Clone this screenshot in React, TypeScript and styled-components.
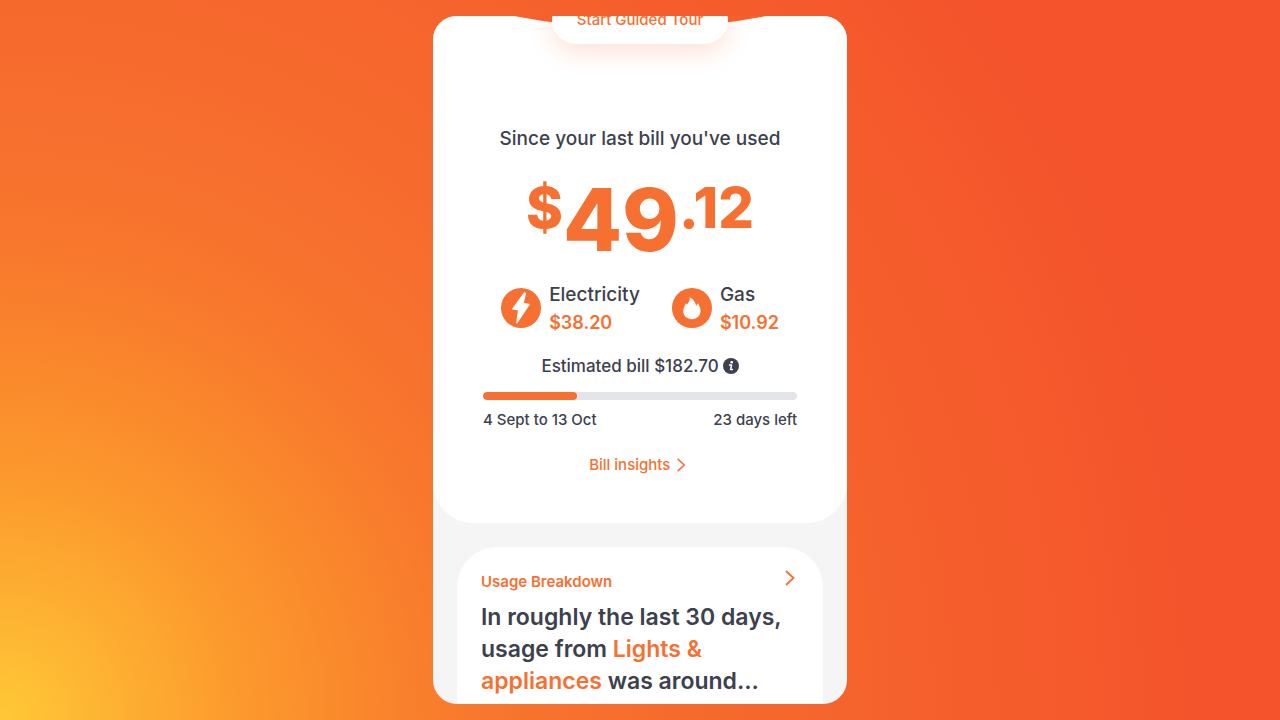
import React from "react";
import styled, { createGlobalStyle } from "styled-components";

const color = {
  orange: "#f67031",
  ink: "#3c414d",
  track: "#e4e5e9",
  canvas: "#f5f5f5",
};

const GlobalStyle = createGlobalStyle`
  *, *::before, *::after { box-sizing: border-box; }
  body {
    margin: 0;
    font-family: Inter, "Liberation Sans", sans-serif;
    color: ${color.ink};
  }
  h1, h2, p { margin: 0; }
`;

const Page = styled.main`
  min-height: 100vh;
  padding: 16px;
  display: flex;
  justify-content: center;
  background: radial-gradient(
    circle farthest-corner at 0% 100%,
    #ffc837 0%,
    #fc9a2d 16%,
    #fa862c 25%,
    #f8782d 32%,
    #f7702e 39%,
    #f6692d 49%,
    #f4532b 83%
  );
`;

const Phone = styled.div`
  width: 100%;
  max-width: 414px;
  height: calc(100vh - 32px);
  overflow: hidden;
  border-radius: 24px;
  background: ${color.canvas};
`;

const Feed = styled.div`
  margin-top: -20px;
  display: flex;
  flex-direction: column;
  gap: 24px;
`;

const Hero = styled.section`
  position: relative;
  display: flex;
  flex-direction: column;
  align-items: center;
  padding: 0 50px 46px;
  background: #fff;
  border-radius: 0 0 40px 40px;
`;

const Curve = styled.svg`
  position: absolute;
  top: 0;
  left: 0;
  width: 100%;
  height: 32px;
`;

const TourButton = styled.button`
  position: relative;
  height: 48px;
  padding: 0 25px;
  border: 0;
  border-radius: 24px;
  background: #fff;
  color: ${color.orange};
  font: 500 15px/24px Inter, "Liberation Sans", sans-serif;
  white-space: nowrap;
  box-shadow: 0 8px 24px rgba(246, 112, 49, 0.2);
`;

const Lead = styled.h1`
  margin-top: 81px;
  font-size: 19px;
  font-weight: 500;
  line-height: 28px;
  white-space: nowrap;
`;

const Amount = styled.p`
  margin-top: 35px;
  display: flex;
  align-items: flex-start;
  color: ${color.orange};
  font-weight: 800;
`;

const AmountPart = styled.span<{ $large?: boolean }>`
  font-size: ${(p) => (p.$large ? 86 : 56)}px;
  line-height: ${(p) => (p.$large ? 64 : 40)}px;
`;

const Fuels = styled.div`
  margin-top: 27px;
  display: flex;
  gap: 32px;
`;

const Fuel = styled.div`
  display: flex;
  align-items: center;
  gap: 8px;
`;

const FuelText = styled.div`
  display: flex;
  flex-direction: column;
  padding-top: 2px;
  font-size: 19px;
  font-weight: 500;
  line-height: 28px;
`;

const FuelCost = styled.span`
  color: ${color.orange};
  font-size: 18px;
  font-weight: 600;
`;

const Estimate = styled.p`
  margin-top: 17px;
  display: flex;
  align-items: center;
  gap: 4px;
  font-size: 17px;
  font-weight: 500;
  line-height: 24px;
  white-space: nowrap;
`;

const InfoButton = styled.button`
  display: flex;
  padding: 0;
  border: 0;
  background: none;
`;

const Track = styled.div`
  width: 100%;
  height: 8px;
  margin-top: 14px;
  border-radius: 4px;
  background: ${color.track};
  overflow: hidden;
`;

const Fill = styled.div`
  height: 100%;
  border-radius: 4px;
  background: ${color.orange};
`;

const Period = styled.div`
  width: 100%;
  margin-top: 8px;
  display: flex;
  justify-content: space-between;
  font-size: 15px;
  font-weight: 500;
  line-height: 24px;
  white-space: nowrap;
`;

const InsightsLink = styled.a`
  margin-top: 21px;
  padding-right: 4px;
  display: flex;
  align-items: center;
  gap: 6px;
  color: ${color.orange};
  font-size: 15px;
  font-weight: 500;
  line-height: 24px;
  text-decoration: none;
`;

const Card = styled.article`
  margin: 0 24px;
  padding: 23px 24px 24px;
  border-radius: 40px 40px 0 0;
  background: #fff;
`;

const CardLink = styled.a`
  display: flex;
  align-items: flex-start;
  justify-content: space-between;
  padding-right: 3px;
  color: ${color.orange};
  font-size: 15px;
  font-weight: 600;
  line-height: 24px;
  text-decoration: none;
`;

const CardHeading = styled.h2`
  margin-top: 7px;
  font-size: 23px;
  font-weight: 600;
  line-height: 32px;
`;

const Highlight = styled.em`
  color: ${color.orange};
  font-style: normal;
`;

const BoltIcon = () => (
  <svg width="40" height="40" viewBox="0 0 40 40" aria-hidden="true">
    <circle cx="20" cy="20" r="20" fill={color.orange} />
    <path
      d="M23.4 4.8 11.6 21 17.6 21.8 15.8 34.8 28.2 16.4 22 15.6 24.6 5.2Z"
      fill="#fff"
      stroke="#fff"
      strokeWidth="1.2"
      strokeLinejoin="round"
    />
  </svg>
);

const FlameIcon = () => (
  <svg width="40" height="40" viewBox="0 0 40 40" aria-hidden="true">
    <circle cx="20" cy="20" r="20" fill={color.orange} />
    <path
      d="M17.6 9.2C18.4 13 15.6 15.2 14.8 16.8C14.5 16 14.2 15.6 13.6 15.2C13.4 17.6 11.2 19.4 11.2 23C11.2 27.8 15 31.2 19.9 31.2C24.8 31.2 28.6 27.6 28.6 22.8C28.6 19.6 26.8 17.8 26.4 15.2C25.2 15.8 24.6 16.8 24.3 18C23.4 14.4 21.6 10.8 17.6 9.2Z"
      fill="#fff"
    />
  </svg>
);

const InfoIcon = () => (
  <svg width="16" height="16" viewBox="0 0 16 16" aria-hidden="true">
    <circle cx="8" cy="8" r="8" fill={color.ink} />
    <circle cx="8.7" cy="4.2" r="1.3" fill="#fff" />
    <path
      d="M6.5 7H8.5L7.6 11.6H9.4"
      fill="none"
      stroke="#fff"
      strokeWidth="1.5"
      strokeLinecap="round"
      strokeLinejoin="round"
    />
  </svg>
);

const Chevron = ({ size }: { size: number }) => (
  <svg width={size * 0.75} height={size} viewBox="0 0 12 16" aria-hidden="true">
    <path
      d="M2.5 1.5 9.5 8 2.5 14.5"
      fill="none"
      stroke={color.orange}
      strokeWidth="1.8"
      strokeLinecap="round"
      strokeLinejoin="round"
    />
  </svg>
);

const fuels = [
  { name: "Electricity", cost: "$38.20", Icon: BoltIcon },
  { name: "Gas", cost: "$10.92", Icon: FlameIcon },
];

const periodProgress = 30;

export default function App() {
  return (
    <>
      <GlobalStyle />
      <Page>
        <Phone>
          <Feed>
            <Hero>
              <Curve viewBox="0 0 414 32" preserveAspectRatio="none" aria-hidden="true">
                <path d="M4 0A657 657 0 0 0 410 0Z" fill="#f5602d" />
              </Curve>
              <TourButton type="button">Start Guided Tour</TourButton>
              <Lead>Since your last bill you've used</Lead>
              <Amount>
                <AmountPart>$</AmountPart>
                <AmountPart $large>49</AmountPart>
                <AmountPart>.12</AmountPart>
              </Amount>
              <Fuels>
                {fuels.map(({ name, cost, Icon }) => (
                  <Fuel key={name}>
                    <Icon />
                    <FuelText>
                      {name}
                      <FuelCost>{cost}</FuelCost>
                    </FuelText>
                  </Fuel>
                ))}
              </Fuels>
              <Estimate>
                Estimated bill $182.70
                <InfoButton type="button" aria-label="About this estimate">
                  <InfoIcon />
                </InfoButton>
              </Estimate>
              <Track role="progressbar" aria-label="Billing period" aria-valuenow={periodProgress}>
                <Fill style={{ width: `${periodProgress}%` }} />
              </Track>
              <Period>
                <span>4 Sept to 13 Oct</span>
                <span>23 days left</span>
              </Period>
              <InsightsLink href="#insights">
                Bill insights
                <Chevron size={14} />
              </InsightsLink>
            </Hero>
            <Card>
              <CardLink href="#usage">
                Usage Breakdown
                <Chevron size={16} />
              </CardLink>
              <CardHeading>
                In roughly the last 30 days, usage from <Highlight>Lights &amp; appliances</Highlight> was
                around...
              </CardHeading>
            </Card>
          </Feed>
        </Phone>
      </Page>
    </>
  );
}
